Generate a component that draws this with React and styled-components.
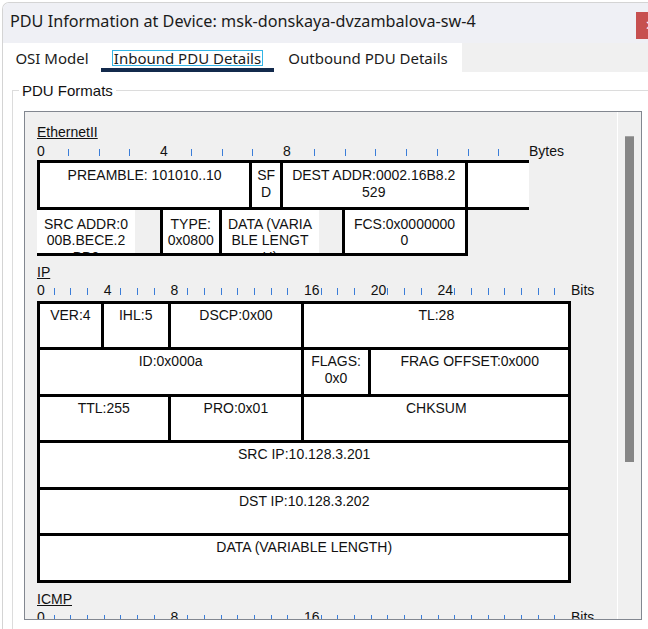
import React from 'react';
import styled, { createGlobalStyle } from 'styled-components';

const GlobalStyle = createGlobalStyle`
  html, body {
    margin: 0;
    padding: 0;
    background: #fff;
    overflow: hidden;
  }
  body {
    width: 648px;
    height: 629px;
    font-family: "Liberation Sans", Arial, sans-serif;
  }
`;

const BYTE = 30.75;
const BIT = 16.7;
const ROW_H = 43.5;

const Dialog = styled.div`
  margin: 2px 0 0 2px;
  width: 690px;
  height: 680px;
  border-top: 1px solid #d4d4d4;
  border-left: 1px solid #d4d4d4;
  border-top-left-radius: 7px;
  background: #fff;
  overflow: hidden;
  display: flex;
  flex-direction: column;
`;

const TitleBar = styled.div`
  height: 40px;
  flex: none;
  display: flex;
  align-items: flex-start;
  background: #eff0f5;
  font-family: "Noto Sans", sans-serif;
  font-size: 16.2px;
  color: #1b1b1b;
`;

const TitleText = styled.div`
  padding-left: 7px;
  line-height: 36px;
`;

const CloseButton = styled.div`
  margin: 9px 0 0 auto;
  width: 57px;
  height: 27px;
  background: #c75050;
  color: #fff;
  font-size: 13px;
  line-height: 27px;
  padding-left: 9px;
  box-sizing: border-box;
`;

const TabStrip = styled.div`
  height: 29px;
  flex: none;
  display: flex;
  background: #f0f0f0;
`;

const TabList = styled.div`
  display: flex;
  background: #fff;
`;

const Tab = styled.div`
  box-sizing: border-box;
  width: ${p => p.$w}px;
  height: 29px;
  display: flex;
  align-items: center;
  justify-content: center;
  font-family: "Noto Sans", sans-serif;
  font-size: 15px;
  color: #1b1b1b;
  box-shadow: ${p => (p.$active ? 'inset 0 -4px 0 #132a4c' : 'none')};
`;

const Focus = styled.span`
  border: 1px solid #33b5e5;
  padding: 0 1px;
  line-height: 14px;
`;

const Body = styled.div`
  flex: 1;
  background: #fff;
`;

const Group = styled.fieldset`
  margin: 10px 0 0 9px;
  padding: 0 0 0 11px;
  border: 1px solid #dcdcdc;
  min-width: 0;
  width: 660px;
  height: 560px;
`;

const Legend = styled.legend`
  margin-left: -5px;
  padding: 0 3px;
  font-size: 15px;
  line-height: 17px;
  color: #111;
`;

const Panel = styled.div`
  box-sizing: border-box;
  margin-top: 12px;
  width: 618px;
  height: 509px;
  border: 1px solid #828790;
  background: #f0f0f0;
  display: flex;
  overflow: hidden;
`;

const Content = styled.div`
  flex: 1;
  padding-left: 12px;
  overflow: hidden;
`;

const ScrollTrack = styled.div`
  box-sizing: border-box;
  width: 24px;
  flex: none;
  border-left: 1px solid #fff;
`;

const Thumb = styled.div`
  box-sizing: border-box;
  margin: 24px 0 0 7px;
  width: 9px;
  height: 326px;
  background: #868686;
  border-top: 1px solid #a3a3a3;
`;

const Section = styled.div`
  margin-top: ${p => p.$gap}px;
`;

const SectionLabel = styled.div`
  font-size: 14px;
  line-height: 17px;
  color: #111;
  text-decoration: underline;
`;

const Ruler = styled.div`
  display: flex;
  height: 17px;
  margin-top: ${p => p.$gap}px;
`;

const Slot = styled.div`
  flex: none;
  width: ${p => p.$w}px;
  font-size: 14px;
  line-height: 17px;
  color: #111;
  white-space: nowrap;
`;

const Tick = styled.div`
  width: 1px;
  height: 7px;
  margin-top: 6px;
  background: #3b7dd8;
`;

const Rows = styled.div`
  margin-top: ${p => p.$gap}px;
`;

const Row = styled.div`
  display: flex;
`;

const Cell = styled.div`
  box-sizing: border-box;
  flex: none;
  width: ${p => p.$w}px;
  height: ${p => ROW_H + 3 + (p.$top ? 3 : 0)}px;
  border-style: solid;
  border-color: #000;
  border-width: ${p => (p.$top ? 3 : 0)}px ${p => (p.$open ? 0 : 3)}px 3px ${p => (p.$left ? 3 : 0)}px;
  background: #f0f0f0;
  overflow: hidden;
  display: flex;
`;

const CellText = styled.div`
  box-sizing: border-box;
  flex: none;
  width: ${p => (p.$fill ? `${p.$fill}px` : '100%')};
  background: #fff;
  padding-top: ${p => p.$pad}px;
  text-align: center;
  font-size: 14px;
  line-height: 16.5px;
  color: #111;
  white-space: nowrap;
`;

const ethernetRows = [
  {
    top: true,
    pad: 4,
    cells: [
      { w: 7 * BYTE, left: true, lines: ['PREAMBLE: 101010..10'] },
      { w: BYTE, lines: ['SF', 'D'] },
      { w: 6 * BYTE, lines: ['DEST ADDR:0002.16B8.2', '529'] },
      { w: 2 * BYTE, open: true, lines: [] },
    ],
  },
  {
    pad: 6,
    cells: [
      { w: 126, fill: 98, lines: ['SRC ADDR:0', '00B.BECE.2', 'BB0'] },
      { w: 58.5, lines: ['TYPE:', '0x0800'] },
      { w: 4 * BYTE, fill: 97, lines: ['DATA (VARIA', 'BLE LENGT', 'H)'] },
      { w: 4 * BYTE, lines: ['FCS:0x0000000', '0'] },
    ],
  },
];

const ipFields = [
  [['VER:4', 4], ['IHL:5', 4], ['DSCP:0x00', 8], ['TL:28', 16]],
  [['ID:0x000a', 16], ['FLAGS:|0x0', 4], ['FRAG OFFSET:0x000', 12]],
  [['TTL:255', 8], ['PRO:0x01', 8], ['CHKSUM', 16]],
  [['SRC IP:10.128.3.201', 32]],
  [['DST IP:10.128.3.202', 32]],
  [['DATA (VARIABLE LENGTH)', 32]],
];

const icmpFields = [
  [['TYPE:0x00', 8], ['CODE:0x00', 8], ['CHECKSUM', 16]],
  [['ID:0x0006', 16], ['SEQ NUMBER:5', 16]],
];

const toRows = fields =>
  fields.map((row, r) => ({
    top: r === 0,
    pad: 3,
    cells: row.map(([text, bits], i) => ({
      w: bits * BIT,
      left: i === 0,
      lines: text.split('|'),
    })),
  }));

const RulerBar = ({ unit, count, marks, end, gap }) => (
  <Ruler $gap={gap}>
    {Array.from({ length: count }, (_, i) => (
      <Slot key={i} $w={unit}>
        {marks.includes(i) ? i : <Tick />}
      </Slot>
    ))}
    <Slot $w={40}>{end}</Slot>
  </Ruler>
);

const FrameRows = ({ rows, gap }) => (
  <Rows $gap={gap}>
    {rows.map((row, r) => (
      <Row key={r}>
        {row.cells.map((c, i) => (
          <Cell key={i} $w={c.w} $top={row.top} $left={c.left} $open={c.open}>
            <CellText $fill={c.fill} $pad={row.pad}>
              {c.lines.map((l, k) => (
                <div key={k}>{l}</div>
              ))}
            </CellText>
          </Cell>
        ))}
      </Row>
    ))}
  </Rows>
);

const App = () => {
  return (
    <>
      <GlobalStyle />
      <Dialog>
        <TitleBar>
          <TitleText>PDU Information at Device: msk-donskaya-dvzambalova-sw-4</TitleText>
          <CloseButton>✕</CloseButton>
        </TitleBar>
        <TabStrip>
          <TabList>
            <Tab $w={98}>OSI Model</Tab>
            <Tab $w={173} $active>
              <Focus>Inbound PDU Details</Focus>
            </Tab>
            <Tab $w={188}>Outbound PDU Details</Tab>
          </TabList>
        </TabStrip>
        <Body>
          <Group>
            <Legend>PDU Formats</Legend>
            <Panel>
              <Content>
                <Section $gap={12}>
                  <SectionLabel>EthernetII</SectionLabel>
                  <RulerBar unit={BYTE} count={16} marks={[0, 4, 8]} end="Bytes" gap={2} />
                  <FrameRows rows={ethernetRows} gap={0} />
                </Section>
                <Section $gap={8}>
                  <SectionLabel>IP</SectionLabel>
                  <RulerBar unit={BIT} count={32} marks={[0, 4, 8, 16, 20, 24]} end="Bits" gap={1} />
                  <FrameRows rows={toRows(ipFields)} gap={1.5} />
                </Section>
                <Section $gap={8}>
                  <SectionLabel>ICMP</SectionLabel>
                  <RulerBar unit={BIT} count={32} marks={[0, 8, 16]} end="Bits" gap={1} />
                  <FrameRows rows={toRows(icmpFields)} gap={1.5} />
                </Section>
              </Content>
              <ScrollTrack>
                <Thumb />
              </ScrollTrack>
            </Panel>
          </Group>
        </Body>
      </Dialog>
    </>
  );
};

export default App;
